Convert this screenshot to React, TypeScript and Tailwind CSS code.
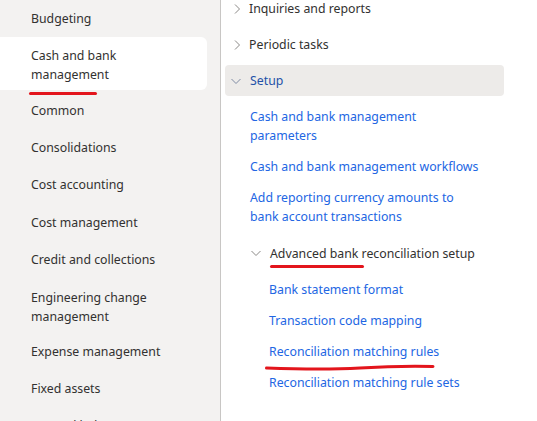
import React from 'react';

const font = { fontFamily: '"Segoe UI", "Noto Sans", sans-serif' };

const modules = [
  'Budgeting',
  'Cash and bank management',
  'Common',
  'Consolidations',
  'Cost accounting',
  'Cost management',
  'Credit and collections',
  'Engineering change management',
  'Expense management',
  'Fixed assets',
  'General ledger',
];

const ChevronRight = () => (
  <svg width="10" height="10" viewBox="0 0 10 10" className="shrink-0">
    <path d="M3 0.5 L7.5 5 L3 9.5" fill="none" stroke="#8a8886" strokeWidth="1" />
  </svg>
);

const ChevronDown = ({ color = '#8a8886' }: { color?: string }) => (
  <svg width="10" height="10" viewBox="0 0 10 10" className="shrink-0">
    <path d="M0.5 3 L5 7.5 L9.5 3" fill="none" stroke={color} strokeWidth="1" />
  </svg>
);

const RedLine = ({ className }: { className: string }) => (
  <div className={`absolute h-[3px] rounded-full bg-[#e3151c] ${className}`} />
);

export default function App() {
  return (
    <div
      className="flex h-[421px] w-[537px] overflow-hidden bg-white text-[12.3px] leading-[19px] text-[#323130]"
      style={font}
    >
      <aside className="w-[221px] shrink-0 border-r border-[#c8c6c4] bg-[#f3f2f1]">
        <ul className="-mt-[0.5px]">
          {modules.map((m) =>
            m === 'Cash and bank management' ? (
              <li key={m} className="relative mb-[1.5px] mr-[13px]">
                <div className="w-[207px] rounded-r-md bg-white pb-[6px] pl-[31px] pr-[60px] pt-[9.5px]">
                  {m}
                </div>
                <RedLine className="left-[29px] top-[55px] w-[68px]" />
              </li>
            ) : m === 'Engineering change management' ? (
              <li key={m} className="pb-[6.5px] pl-[31px] pr-[60px] pt-[10px]">
                {m}
              </li>
            ) : (
              <li key={m} className="py-[9.15px] pl-[31px] pr-[40px]">
                {m}
              </li>
            )
          )}
        </ul>
      </aside>

      <main className="flex-1 pl-[4px]">
        <div className="-mt-[7px] flex flex-col gap-[5px]">
          <div className="flex h-[31px] w-[279px] items-center gap-[7px] pl-[7px]">
            <ChevronRight />
            <span>Inquiries and reports</span>
          </div>
          <div className="flex h-[31px] w-[279px] items-center gap-[7px] pl-[7px]">
            <ChevronRight />
            <span>Periodic tasks</span>
          </div>
          <div className="flex h-[31px] w-[279px] items-center gap-[9px] rounded bg-[#edebe9] pl-[6px]">
            <ChevronDown color="#7f8aa3" />
            <span className="text-[#2451a8]">Setup</span>
          </div>
        </div>

        <div className="mt-[5px] pl-[25px] text-[#2266e3]">
          <div className="w-[200px] py-[6px]">Cash and bank management parameters</div>
          <div className="py-[6px]">Cash and bank management workflows</div>
          <div className="w-[220px] py-[6px]">Add reporting currency amounts to bank account transactions</div>

          <div className="relative flex h-[42px] items-center gap-[9px] pl-[1px] text-[#323130]">
            <ChevronDown />
            <span>Advanced bank reconciliation setup</span>
            <RedLine className="left-[20px] top-[33px] w-[94px]" />
          </div>

          <div className="pl-[19px]">
            <div className="py-[6px]">Bank statement format</div>
            <div className="py-[6px]">Transaction code mapping</div>
            <div className="relative py-[6px]">
              Reconciliation matching rules
              <svg
                width="172"
                height="8"
                viewBox="0 0 172 8"
                className="absolute left-[-4px] top-[27px]"
              >
                <path
                  d="M1.5 5 C40 6.5 70 6.5 95 5 C120 3.5 145 3 168 3.5"
                  fill="none"
                  stroke="#e3151c"
                  strokeWidth="3"
                  strokeLinecap="round"
                />
              </svg>
            </div>
            <div className="py-[6px]">Reconciliation matching rule sets</div>
          </div>
        </div>
      </main>
    </div>
  );
}
